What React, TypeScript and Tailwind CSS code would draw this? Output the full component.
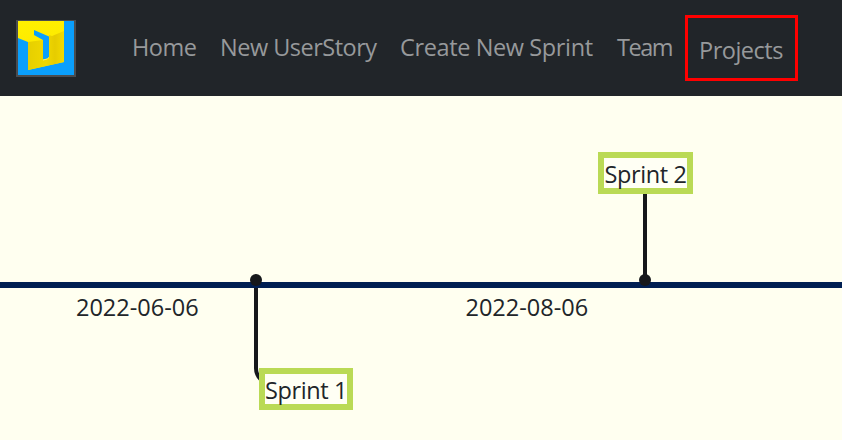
const FONT = "font-['Open_Sans','Noto_Sans',sans-serif]";

function Logo() {
  return (
    <svg viewBox="0 0 60 57" className="h-[57px] w-[60px] shrink-0" aria-label="Logo">
      <defs>
        <linearGradient id="gold" x1="0" y1="0" x2="0.2" y2="1">
          <stop offset="0" stopColor="#fff000" />
          <stop offset="1" stopColor="#fde600" />
        </linearGradient>
        <linearGradient id="side" x1="0" y1="0" x2="1" y2="0">
          <stop offset="0" stopColor="#e6cf00" />
          <stop offset="0.5" stopColor="#f0d800" />
          <stop offset="0.75" stopColor="#e6cc00" />
          <stop offset="1" stopColor="#f2da00" />
        </linearGradient>
      </defs>
      <rect width="60" height="57" fill="#4a4d50" />
      <rect x="2" y="1" width="56" height="54" fill="#0a9ffc" />
      <path d="M2 1H48V42L12 50V22L2 18Z" fill="url(#gold)" />
      <path d="M12 22L27 20V38H33V15L36 16L48 11V42L12 50Z" fill="url(#side)" />
      <path d="M18 10L33 16.5V37L31.500 38.500L27 39.500V20L18 15Z" fill="#0a9ffc" />
      <path d="M27 39.500L31.500 38.500L33 37V38L31 39.500L27 40.500Z" fill="#fff36a" />
    </svg>
  );
}

function SprintLabel({ name }: { name: string }) {
  return (
    <div className="flex h-[42px] items-center justify-center border-[6px] border-[#bada55] bg-[#fffff4] pt-[2px] tracking-[-0.4px] whitespace-nowrap">
      {name}
    </div>
  );
}

export default function App() {
  return (
    <div className={`h-[440px] w-[842px] overflow-hidden bg-[#fffff0] text-[23.5px] text-[#212529] ${FONT}`}>
      <nav className="flex h-24 items-start bg-[#212529] pl-4 leading-9 whitespace-nowrap text-[#97999b]">
        <div className="pt-5"><Logo /></div>
        <a className="ml-14 w-[88px] pt-[29px] tracking-[-0.5px]">Home</a>
        <a className="w-[180px] pt-[29px] tracking-[-0.5px]">New UserStory</a>
        <a className="w-[217px] pt-[29px] tracking-[-0.38px]">Create New Sprint</a>
        <a className="w-[68px] pt-[29px] tracking-[-1.5px]">Team</a>
        <div className="mt-[15px] h-[66px] w-[113px] border-[3px] border-[#ff0000] pt-[14px] pl-[11px] tracking-[-0.5px]">Projects</div>
      </nav>

      <main className="leading-[36px]">
        <div className="flex h-[186px] justify-end pt-14 pr-[149px]">
          <div className="w-[95px]">
            <SprintLabel name="Sprint 2" />
            <div className="ml-[45px] h-[88px] w-1 bg-[#16181b]" />
          </div>
        </div>
        <div className="relative h-1.5 bg-[#001f52]">
          <span className="absolute -top-2 left-[250px] size-3 rounded-full bg-[#16181b]" />
          <span className="absolute -top-2 left-[639px] size-3 rounded-full bg-[#16181b]" />
        </div>
        <div className="flex h-[152px] whitespace-nowrap">
          <div className="w-[254px] pl-[76px] pt-[1px]">2022-06-06</div>
          <div className="relative w-[99px]">
            <div className="h-[98px] w-5 rounded-bl-[18px] border-b-4 border-l-4 border-[#16181b]" />
            <div className="absolute top-[80px] left-[5px] w-[94px]">
              <SprintLabel name="Sprint 1" />
            </div>
          </div>
          <div className="pl-[112.500px] pt-[1px]">2022-08-06</div>
        </div>
      </main>
    </div>
  );
}
